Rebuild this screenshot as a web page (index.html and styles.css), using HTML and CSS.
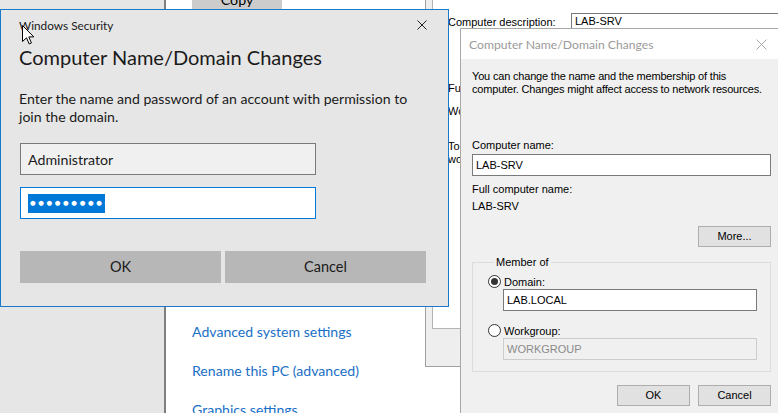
FILE: index.html
```html
<!DOCTYPE html>
<html>
<head>
<meta charset="utf-8">
<link rel="stylesheet" href="styles.css">
</head>
<body>
<div class="desktop">

  <div class="settings">
    <div class="settings-nav"></div>
    <div class="settings-main">
      <div class="copy-btn">Copy</div>
      <div class="links">
        <a class="link">Advanced system settings</a>
        <a class="link">Rename this PC (advanced)</a>
        <a class="link">Graphics settings</a>
      </div>
    </div>
  </div>

  <div class="sysprops">
    <div class="tab-panel">
      <div class="desc-row">
        <span class="cl-label desc-label">Computer description:</span>
        <div class="cl-input desc-input">LAB-SRV</div>
      </div>
      <div class="cl-text full-label">Full computer name:</div>
      <div class="cl-text wg-label">Workgroup:</div>
      <div class="cl-text rename-text">To rename this computer or change its domain or<br>workgroup, click Change.</div>
    </div>
  </div>

  <div class="cnd">
    <div class="cnd-title">
      <span>Computer Name/Domain Changes</span>
      <svg class="cnd-x" width="11" height="11" viewBox="0 0 11 11"><path d="M0.5 0.5L10.5 10.5M10.5 0.5L0.5 10.5" stroke="#a8a8a8" stroke-width="1" fill="none"/></svg>
    </div>
    <div class="cnd-body">
      <p class="cnd-intro">You can change the name and the membership of this<br>computer. Changes might affect access to network resources.</p>
      <div class="cl-text cn-label">Computer name:</div>
      <div class="cl-input cn-input">LAB-SRV</div>
      <div class="cl-text fcn-label">Full computer name:</div>
      <div class="cl-text fcn-value">LAB-SRV</div>
      <div class="more-row"><div class="cl-btn more-btn">More...</div></div>
      <fieldset class="member">
        <legend class="cl-text">Member of</legend>
        <div class="radio-row">
          <span class="radio checked"><span class="radio-dot"></span></span>
          <span class="cl-text">Domain:</span>
        </div>
        <div class="cl-input dom-input">LAB.LOCAL</div>
        <div class="radio-row wg-row">
          <span class="radio"></span>
          <span class="cl-text">Workgroup:</span>
        </div>
        <div class="cl-input dom-input disabled">WORKGROUP</div>
      </fieldset>
      <div class="cnd-buttons">
        <div class="cl-btn">OK</div>
        <div class="cl-btn">Cancel</div>
      </div>
    </div>
  </div>

  <div class="winsec">
    <div class="ws-title">
      <span>Windows Security</span>
      <svg class="ws-x" width="10" height="10" viewBox="0 0 10 10"><path d="M0.5 0.5L9.5 9.5M9.5 0.5L0.5 9.5" stroke="#222" stroke-width="1" fill="none"/></svg>
    </div>
    <div class="ws-heading">Computer Name/Domain Changes</div>
    <p class="ws-text">Enter the name and password of an account with permission to<br>join the domain.</p>
    <div class="ws-input user">Administrator</div>
    <div class="ws-input pass"><span class="sel">●●●●●●●●●●</span></div>
    <div class="ws-buttons">
      <div class="ws-btn">OK</div>
      <div class="ws-btn">Cancel</div>
    </div>
  </div>

  <svg class="cursor" width="13" height="20" viewBox="0 0 13 20"><path d="M0.5 0.5L0.5 16.5L4.5 12.8L7.2 19L9.4 18L6.8 11.9L11.8 11.9Z" fill="#fff" stroke="#000" stroke-width="1" stroke-linejoin="miter"/></svg>
</div>
</body>
</html>
```
FILE: styles.css
```css
* { box-sizing: border-box; }
html, body { margin: 0; padding: 0; }
body { width: 778px; height: 413px; overflow: hidden; background: #fff; }

.desktop {
  position: relative;
  width: 778px;
  height: 413px;
  overflow: hidden;
  font-family: Lato, "Noto Sans", sans-serif;
  color: #000;
}

/* ---------- Settings window (background) ---------- */
.settings {
  position: absolute;
  left: 0;
  top: 0;
  width: 440px;
  height: 413px;
  display: flex;
}
.settings-nav {
  width: 166px;
  background: #e6e6e6;
  border-right: 2px solid #7f7f7f;
  flex: none;
}
.settings-main {
  flex: 1;
  background: #fff;
  padding-left: 26px;
  display: flex;
  flex-direction: column;
  align-items: flex-start;
}
.copy-btn {
  margin-top: -10px;
  width: 90px;
  height: 22px;
  background: #cccccc;
  font-size: 14.2px;
  line-height: 20px;
  text-align: center;
}
.links {
  margin-top: 312px;
  display: flex;
  flex-direction: column;
  gap: 19px;
}
.link {
  font-size: 14.1px;
  line-height: 20px;
  color: #1a6fc6;
  white-space: nowrap;
}

/* ---------- System Properties (background) ---------- */
.sysprops {
  position: absolute;
  left: 425px;
  top: 0;
  width: 360px;
  height: 367px;
  background: #eeeeee;
  border: 1px solid #a0a0a0;
  border-top: none;
  padding-left: 6px;
}
.tab-panel {
  height: 329px;
  background: #fff;
  border: 1px solid #b4b4b4;
  border-top: none;
  padding-left: 15px;
  display: flex;
  flex-direction: column;
  align-items: flex-start;
}
.cl-text, .cl-label, .cl-input, .cl-btn, .cnd-intro {
  font-family: "Liberation Sans", Arial, sans-serif;
  font-size: 11px;
  color: #000;
}
.desc-row {
  margin-top: 13px;
  display: flex;
  align-items: center;
  height: 17px;
}
.desc-label {
  width: 123px;
  flex: none;
}
.desc-input {
  width: 220px;
  height: 17px;
  line-height: 15px;
  border-top: 1px solid #7a7a7a;
  border-left: 1px solid #7a7a7a;
  border-bottom: 1px solid #d8d8d8;
  padding-left: 3px;
  background: #fff;
}
.full-label { margin-top: 52px; line-height: 13px; }
.wg-label { margin-top: 10px; line-height: 13px; }
.rename-text { margin-top: 22px; line-height: 13px; }

/* ---------- Computer Name/Domain Changes dialog ---------- */
.cnd {
  position: absolute;
  left: 460px;
  top: 28px;
  width: 326px;
  height: 400px;
  border: 1px solid #a8a8a8;
  background: #f0f0f0;
  display: flex;
  flex-direction: column;
}
.cnd-title {
  height: 30px;
  background: #fff;
  display: flex;
  align-items: center;
  padding-left: 8px;
  font-family: Lato, "Noto Sans", sans-serif;
  font-size: 12.2px;
  color: #9a9a9a;
  flex: none;
}
.cnd-title span { flex: 1; }
.cnd-x { margin-right: 18px; }
.cnd-body {
  padding: 0 14px 0 11px;
  display: flex;
  flex-direction: column;
}
.cnd-intro {
  margin: 11px 0 0 0;
  line-height: 13px;
  letter-spacing: -0.18px;
  white-space: nowrap;
}
.cn-label { margin-top: 43px; line-height: 13px; }
.cl-input {
  background: #fff;
  border: 1px solid #7a7a7a;
  padding-left: 3px;
  white-space: nowrap;
}
.cn-input {
  margin-top: 2px;
  height: 22px;
  line-height: 20px;
}
.fcn-label { margin-top: 7px; line-height: 13px; }
.fcn-value { margin-top: 4px; line-height: 13px; }
.more-row {
  margin-top: 13px;
  display: flex;
  justify-content: flex-end;
}
.cl-btn {
  width: 73px;
  height: 21px;
  line-height: 19px;
  background: #e1e1e1;
  border: 1px solid #adadad;
  text-align: center;
}
.member {
  margin: 9px 0 0 0;
  padding: 0 13px 11px 15px;
  border: 1px solid #dcdcdc;
  min-width: 0;
}
.member legend {
  padding: 0 2px;
  margin-left: 6px;
  line-height: 13px;
}
.radio-row {
  display: flex;
  align-items: center;
  gap: 3px;
  margin-top: 5px;
  height: 15px;
}
.radio {
  width: 13px;
  height: 13px;
  border: 1px solid #333;
  border-radius: 50%;
  background: #fff;
  display: flex;
  align-items: center;
  justify-content: center;
  flex: none;
}
.radio-dot {
  width: 7px;
  height: 7px;
  border-radius: 50%;
  background: #333;
}
.dom-input {
  margin-top: 0;
  margin-left: 15px;
  height: 22px;
  line-height: 20px;
}
.wg-row { margin-top: 12px; }
.dom-input.disabled {
  background: #f0f0f0;
  border-color: #cccccc;
  color: #8a8a8a;
}
.cnd-buttons {
  margin-top: 13px;
  display: flex;
  justify-content: flex-end;
  gap: 8px;
}

/* ---------- Windows Security dialog ---------- */
.winsec {
  position: absolute;
  left: 0;
  top: 9px;
  width: 449px;
  height: 298px;
  background: #e6e6e6;
  border: 1px solid #1979ca;
  padding: 0 22px 0 18px;
  display: flex;
  flex-direction: column;
}
.ws-title {
  height: 30px;
  display: flex;
  align-items: center;
  font-size: 11.8px;
  color: #1a1a1a;
}
.ws-title span { flex: 1; }
.ws-x { margin-right: -1px; }
.ws-heading {
  height: 34px;
  line-height: 34px;
  font-size: 20px;
  color: #1a1a1a;
  white-space: nowrap;
}
.ws-text {
  margin: 16px 0 0 0;
  font-size: 14.1px;
  line-height: 18px;
  color: #1a1a1a;
  white-space: nowrap;
}
.ws-input {
  margin-left: 1px;
  width: 296px;
  height: 32px;
  font-size: 14.2px;
  padding-left: 7px;
  display: flex;
  align-items: center;
  color: #1a1a1a;
}
.ws-input.user {
  margin-top: 17px;
  background: #f0f0f0;
  border: 1px solid #7a7a7a;
}
.ws-input.pass {
  margin-top: 12px;
  background: #fff;
  border: 1px solid #0078d7;
}
.sel {
  background: #0078d7;
  color: #fff;
  height: 19px;
  width: 77px;
  font-family: "DejaVu Sans", sans-serif;
  font-size: 6.5px;
  line-height: 19px;
  letter-spacing: 2.6px;
  padding-left: 2px;
  overflow: hidden;
  white-space: nowrap;
}
.ws-buttons {
  margin-top: 32px;
  margin-left: 1px;
  display: flex;
  gap: 4px;
}
.ws-btn {
  width: 201px;
  height: 32px;
  background: #b7b7b7;
  font-size: 14.5px;
  line-height: 32px;
  text-align: center;
  color: #1a1a1a;
}

.cursor {
  position: absolute;
  left: 22px;
  top: 25px;
}
```
